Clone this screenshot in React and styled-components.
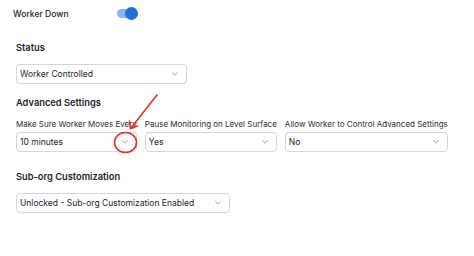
import React from "react";
import styled, { createGlobalStyle } from "styled-components";

const Global = createGlobalStyle`
  html, body { margin: 0; padding: 0; background: #ffffff; }
  body { font-family: Inter, "Noto Sans", sans-serif; color: #1d1d1f; }
`;

const Page = styled.div`
  position: relative;
  width: 474px;
  height: 256px;
  box-sizing: border-box;
  padding: 0 16px;
  overflow: hidden;
`;

const ToggleRow = styled.div`
  display: flex;
  align-items: center;
  gap: 48px;
  height: 27px;
  margin-left: -3px;
`;

const ToggleLabel = styled.span`
  font-size: 8.6px;
  font-weight: 500;
  color: #1d1d1f;
`;

const Track = styled.span`
  position: relative;
  display: inline-block;
  width: 19px;
  height: 9px;
  border-radius: 5px;
  background: ${(p) => (p.$on ? "#8db5ef" : "#cfd3d8")};
`;

const Knob = styled.span`
  position: absolute;
  top: -2px;
  ${(p) => (p.$on ? "right: -2px;" : "left: -2px;")}
  width: 13px;
  height: 13px;
  border-radius: 50%;
  background: #1f6fd8;
`;

const Heading = styled.h3`
  margin: ${(p) => p.$top}px 0 9px;
  font-size: 9.3px;
  line-height: 14px;
  font-weight: 600;
  color: #1d1d1f;
`;

const FieldRow = styled.div`
  display: flex;
  gap: 8px;
  align-items: flex-start;
`;

const Field = styled.div`
  display: flex;
  flex-direction: column;
  gap: 2px;
`;

const Label = styled.label`
  font-size: 8px;
  line-height: 11px;
  color: #2b2b2b;
  white-space: nowrap;
`;

const Select = styled.div`
  box-sizing: border-box;
  display: flex;
  align-items: center;
  justify-content: space-between;
  width: ${(p) => (p.$width ? `${p.$width}px` : "100%")};
  height: 20px;
  padding: 0 8px 0 3px;
  border: 1px solid #d3d5d9;
  border-radius: 4px;
  background: #fff;
  font-size: 8.5px;
  color: #1d1d1f;
`;

const Chevron = () => (
  <svg width="6" height="4" viewBox="0 0 6 4" fill="none">
    <path d="M0.5 0.7 L3 3.1 L5.5 0.7" stroke="#8a8d92" strokeWidth="0.8" strokeLinecap="round" strokeLinejoin="round" />
  </svg>
);

const Dropdown = ({ value, width }) => (
  <Select $width={width}>
    <span>{value}</span>
    <Chevron />
  </Select>
);

const Annotation = styled.svg`
  position: absolute;
  left: 0;
  top: 0;
  pointer-events: none;
`;

export default function App() {
  return (
    <>
      <Global />
      <Page>
        <ToggleRow>
          <ToggleLabel>Worker Down</ToggleLabel>
          <Track $on>
            <Knob $on />
          </Track>
        </ToggleRow>

        <Heading $top={14}>Status</Heading>
        <Dropdown value="Worker Controlled" width={171} />

        <Heading $top={12}>Advanced Settings</Heading>
        <FieldRow>
          <Field>
            <Label>Make Sure Worker Moves Every</Label>
            <Dropdown value="10 minutes" />
          </Field>
          <Field>
            <Label>Pause Monitoring on Level Surface</Label>
            <Dropdown value="Yes" />
          </Field>
          <Field>
            <Label>Allow Worker to Control Advanced Settings</Label>
            <Dropdown value="No" />
          </Field>
        </FieldRow>

        <Heading $top={18}>Sub-org Customization</Heading>
        <Dropdown value="Unlocked - Sub-org Customization Enabled" width={214} />

        <Annotation width="474" height="256" viewBox="0 0 474 256">
          <ellipse cx="125.5" cy="142.5" rx="11" ry="10" fill="none" stroke="#ec2f1f" strokeWidth="1.6" />
          <path d="M157 95 L130.5 128.5" stroke="#ec2f1f" strokeWidth="1.6" strokeLinecap="round" />
          <path d="M129.5 121 L130.5 128.5 L137.5 126" fill="none" stroke="#ec2f1f" strokeWidth="1.6" strokeLinecap="round" strokeLinejoin="round" />
        </Annotation>
      </Page>
    </>
  );
}
